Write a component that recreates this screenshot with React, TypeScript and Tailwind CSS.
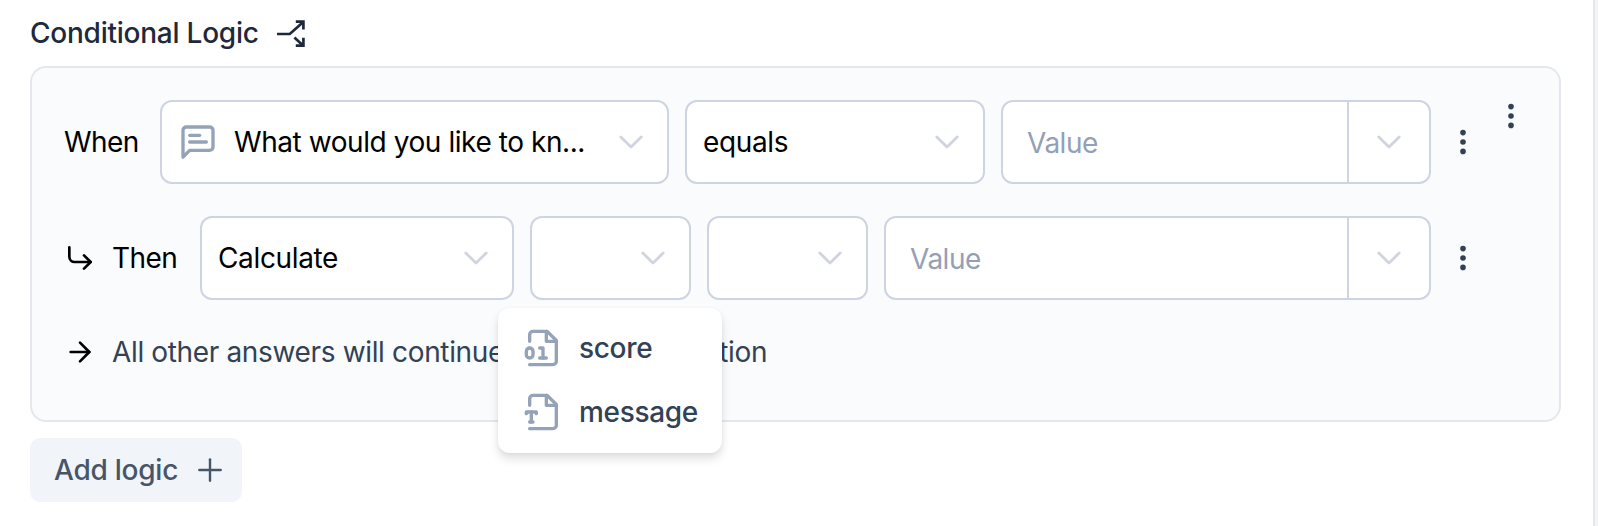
import type { ReactNode } from "react";

function Chevron() {
  return (
    <svg className="h-6 w-6 shrink-0 text-[#cfd4df]" viewBox="0 0 24 24" fill="none" stroke="currentColor" strokeWidth="2.8" strokeLinecap="round" strokeLinejoin="round">
      <path d="M1.8 7 12 17 22.2 7" />
    </svg>
  );
}

function Icon({ className, children, strokeWidth = 2 }: { className: string; children: ReactNode; strokeWidth?: number }) {
  return (
    <svg className={className} viewBox="0 0 24 24" fill="none" stroke="currentColor" strokeWidth={strokeWidth} strokeLinecap="round" strokeLinejoin="round">
      {children}
    </svg>
  );
}

function Dots({ className }: { className: string }) {
  return (
    <svg className={className} viewBox="0 0 8 26" fill="currentColor">
      <circle cx="4" cy="3.6" r="2.8" />
      <circle cx="4" cy="13" r="2.8" />
      <circle cx="4" cy="22.4" r="2.8" />
    </svg>
  );
}

function Select({ className, children }: { className: string; children?: ReactNode }) {
  return (
    <div className={`flex h-21 shrink-0 items-center rounded-xl border-2 border-[#cdd4e2] bg-white pl-4 pr-6 text-black ${className}`}>
      <div className="flex min-w-0 flex-1 items-center">{children}</div>
      <Chevron />
    </div>
  );
}

function ValueInput({ className }: { className: string }) {
  return (
    <div className={`flex h-21 shrink-0 rounded-xl border-2 border-[#cdd4e2] bg-white ${className}`}>
      <div className="flex flex-1 items-center pl-6 pt-[2px] tracking-[-0.5px] text-[#94a0b5]">Value</div>
      <div className="flex w-[82px] items-center justify-center border-l-2 border-[#cdd4e2]">
        <Chevron />
      </div>
    </div>
  );
}

function MenuItem({ label, children }: { label: string; children: ReactNode }) {
  return (
    <div className="flex h-16 items-center pl-[25px] text-[#334155]">
      <Icon className="h-10 w-10 shrink-0 text-[#94a3b8]">
        <path d="M4 22h14a2 2 0 0 0 2-2V7.5L14.5 2H6a2 2 0 0 0-2 2v4" />
        <path d="M14 2v6h6" />
        {children}
      </Icon>
      <span className="ml-4 font-medium tracking-[-0.33px]">{label}</span>
    </div>
  );
}

export default function App() {
  return (
    <div className="flex h-[526px] w-full overflow-hidden bg-white font-['Inter',sans-serif] text-[28px] leading-10 tracking-[-0.35px]">
      <main className="flex flex-1 flex-col items-start pl-[30px]">
        <h2 className="flex h-[66px] items-center font-medium tracking-[-0.24px] text-[#1e293b]">
          <span>Conditional Logic</span>
          <svg className="ml-[17px] mt-[2px] h-[30px] w-[30px]" viewBox="0 0 30 30" fill="none" stroke="currentColor" strokeWidth="2.7">
            <path d="M1 15h12.8L27.5 2.8" />
            <path d="M19.8 2.7h7.6v7.8" />
            <path d="m18.4 18.6 8.6 8" />
            <path d="M19.8 26.6h7.6v-7.8" />
          </svg>
        </h2>

        <section className="relative h-[356px] w-[1531px] rounded-2xl border-2 border-[#e4e8ed] bg-[#f9fbfd] pl-8 pt-8">
          <div className="flex h-21 items-center">
            <span className="w-24 shrink-0 tracking-[-0.6px] text-black">When</span>
            <Select className="w-[509px]">
              <Icon className="h-10 w-10 shrink-0 text-[#94a3b8]">
                <path d="M21 15a2 2 0 0 1-2 2H7l-4 4V5a2 2 0 0 1 2-2h14a2 2 0 0 1 2 2z" />
                <path d="M13 8H7" />
                <path d="M17 12H7" />
              </Icon>
              <span className="ml-4 whitespace-nowrap tracking-[-0.43px]">What would you like to kn...</span>
            </Select>
            <Select className="ml-4 w-[300px]">equals</Select>
            <ValueInput className="ml-4 w-[430px]" />
            <Dots className="ml-7 h-[26px] w-2 shrink-0 text-[#334155]" />
            <Dots className="mb-13 ml-10 h-[26px] w-2 shrink-0 text-[#334155]" />
          </div>

          <div className="mt-8 flex h-21 items-center">
            <Icon className="h-8 w-8 shrink-0 text-black">
              <path d="m15 10 5 5-5 5" />
              <path d="M4 4v7a4 4 0 0 0 4 4h12" />
            </Icon>
            <span className="ml-4 w-[88px] shrink-0 tracking-[-0.6px] text-black">Then</span>
            <Select className="w-[314px]">Calculate</Select>
            <div className="relative ml-4 shrink-0">
              <Select className="w-[161px]" />
              <div className="absolute left-[-32px] top-[92px] z-10 flex h-[145px] w-[224px] flex-col rounded-xl bg-white pt-2 shadow-[0_6px_10px_rgba(0,0,0,0.12),0_1px_5px_rgba(0,0,0,0.04)]">
                <MenuItem label="score">
                  <rect x="2" y="12" width="4" height="6" rx="2" />
                  <path d="M10 12h2v6" />
                  <path d="M10 18h4" />
                </MenuItem>
                <MenuItem label="message">
                  <path d="M2 13v-1h6v1" />
                  <path d="M4 18h2" />
                  <path d="M5 12v6" />
                </MenuItem>
              </div>
            </div>
            <Select className="ml-4 w-[161px]" />
            <ValueInput className="ml-4 w-[547px]" />
            <Dots className="ml-7 h-[26px] w-2 shrink-0 text-[#334155]" />
          </div>

          <div className="mt-8 flex h-10 items-center text-[#334155]">
            <Icon className="h-8 w-8 shrink-0 text-black">
              <path d="M5 12h14" />
              <path d="m12 5 7 7-7 7" />
            </Icon>
            <span className="ml-4 whitespace-nowrap">All other answers will continue to the next question</span>
          </div>
        </section>

        <button className="mt-4 flex h-16 w-[212px] items-center rounded-[10px] bg-[#f1f5f9] pl-6 font-medium tracking-[-0.24px] text-[#475569]">
          <span>Add logic</span>
          <Icon className="ml-4 h-8 w-8" strokeWidth={1.8}>
            <path d="M4 12h16" />
            <path d="M12 4v16" />
          </Icon>
        </button>
      </main>
      <aside className="w-[5px] shrink-0 border-l-2 border-[#e5e7eb] bg-[#f3f4f6]" />
    </div>
  );
}
